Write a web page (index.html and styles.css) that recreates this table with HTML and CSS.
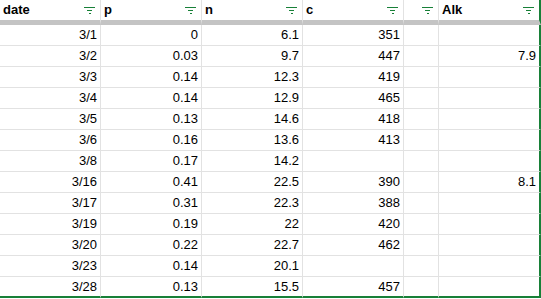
FILE: index.html
```html
<!DOCTYPE html>
<html>
<head>
<meta charset="utf-8">
<link rel="stylesheet" href="styles.css">
</head>
<body>
<div class="sheet">
  <div class="cell head"><span>date</span><svg class="filter" width="11" height="7" viewBox="0 0 11 7"><rect x="0" y="0" width="11" height="1"/><rect x="3" y="3" width="5" height="1"/><rect x="5" y="6" width="2" height="1"/></svg></div>
  <div class="cell head"><span>p</span><svg class="filter" width="11" height="7" viewBox="0 0 11 7"><rect x="0" y="0" width="11" height="1"/><rect x="3" y="3" width="5" height="1"/><rect x="5" y="6" width="2" height="1"/></svg></div>
  <div class="cell head"><span>n</span><svg class="filter" width="11" height="7" viewBox="0 0 11 7"><rect x="0" y="0" width="11" height="1"/><rect x="3" y="3" width="5" height="1"/><rect x="5" y="6" width="2" height="1"/></svg></div>
  <div class="cell head"><span>c</span><svg class="filter" width="11" height="7" viewBox="0 0 11 7"><rect x="0" y="0" width="11" height="1"/><rect x="3" y="3" width="5" height="1"/><rect x="5" y="6" width="2" height="1"/></svg></div>
  <div class="cell head"><span></span><svg class="filter" width="11" height="7" viewBox="0 0 11 7"><rect x="0" y="0" width="11" height="1"/><rect x="3" y="3" width="5" height="1"/><rect x="5" y="6" width="2" height="1"/></svg></div>
  <div class="cell head last-col"><span>Alk</span><svg class="filter" width="11" height="7" viewBox="0 0 11 7"><rect x="0" y="0" width="11" height="1"/><rect x="3" y="3" width="5" height="1"/><rect x="5" y="6" width="2" height="1"/></svg></div>

  <div class="cell num">3/1</div><div class="cell num">0</div><div class="cell num">6.1</div><div class="cell num">351</div><div class="cell num"></div><div class="cell num last-col"></div>
  <div class="cell num">3/2</div><div class="cell num">0.03</div><div class="cell num">9.7</div><div class="cell num">447</div><div class="cell num"></div><div class="cell num last-col">7.9</div>
  <div class="cell num">3/3</div><div class="cell num">0.14</div><div class="cell num">12.3</div><div class="cell num">419</div><div class="cell num"></div><div class="cell num last-col"></div>
  <div class="cell num">3/4</div><div class="cell num">0.14</div><div class="cell num">12.9</div><div class="cell num">465</div><div class="cell num"></div><div class="cell num last-col"></div>
  <div class="cell num">3/5</div><div class="cell num">0.13</div><div class="cell num">14.6</div><div class="cell num">418</div><div class="cell num"></div><div class="cell num last-col"></div>
  <div class="cell num">3/6</div><div class="cell num">0.16</div><div class="cell num">13.6</div><div class="cell num">413</div><div class="cell num"></div><div class="cell num last-col"></div>
  <div class="cell num">3/8</div><div class="cell num">0.17</div><div class="cell num">14.2</div><div class="cell num"></div><div class="cell num"></div><div class="cell num last-col"></div>
  <div class="cell num">3/16</div><div class="cell num">0.41</div><div class="cell num">22.5</div><div class="cell num">390</div><div class="cell num"></div><div class="cell num last-col">8.1</div>
  <div class="cell num">3/17</div><div class="cell num">0.31</div><div class="cell num">22.3</div><div class="cell num">388</div><div class="cell num"></div><div class="cell num last-col"></div>
  <div class="cell num">3/19</div><div class="cell num">0.19</div><div class="cell num">22</div><div class="cell num">420</div><div class="cell num"></div><div class="cell num last-col"></div>
  <div class="cell num">3/20</div><div class="cell num">0.22</div><div class="cell num">22.7</div><div class="cell num">462</div><div class="cell num"></div><div class="cell num last-col"></div>
  <div class="cell num">3/23</div><div class="cell num">0.14</div><div class="cell num">20.1</div><div class="cell num"></div><div class="cell num"></div><div class="cell num last-col"></div>
  <div class="cell num last-row">3/28</div><div class="cell num last-row">0.13</div><div class="cell num last-row">15.5</div><div class="cell num last-row">457</div><div class="cell num last-row"></div><div class="cell num last-row last-col"></div>
</div>
</body>
</html>
```
FILE: styles.css
```css
html, body {
  margin: 0;
  padding: 0;
  background: #ffffff;
}
body {
  font-family: "Liberation Sans", Arial, sans-serif;
  font-size: 13px;
  color: #000000;
}
.sheet {
  display: grid;
  grid-template-columns: 101px 101px 101px 101px 35px 102px;
  grid-auto-rows: 21px;
  grid-template-rows: 25px;
  width: 541px;
}
.cell {
  box-sizing: border-box;
  border-right: 1px solid #e2e2e2;
  border-bottom: 1px solid #e2e2e2;
  line-height: 20px;
  overflow: hidden;
  white-space: nowrap;
}
.head {
  display: flex;
  justify-content: space-between;
  align-items: flex-start;
  font-weight: bold;
  padding-left: 3px;
  padding-right: 5px;
  border-bottom: 5px solid #c4c4c4;
}
.filter {
  margin-top: 7px;
  fill: #188038;
  flex: none;
}
.num {
  text-align: right;
  padding-right: 3px;
}
.last-col {
  border-right: 2px solid #188038;
}
.last-row {
  border-bottom: 2px solid #188038;
}
```
